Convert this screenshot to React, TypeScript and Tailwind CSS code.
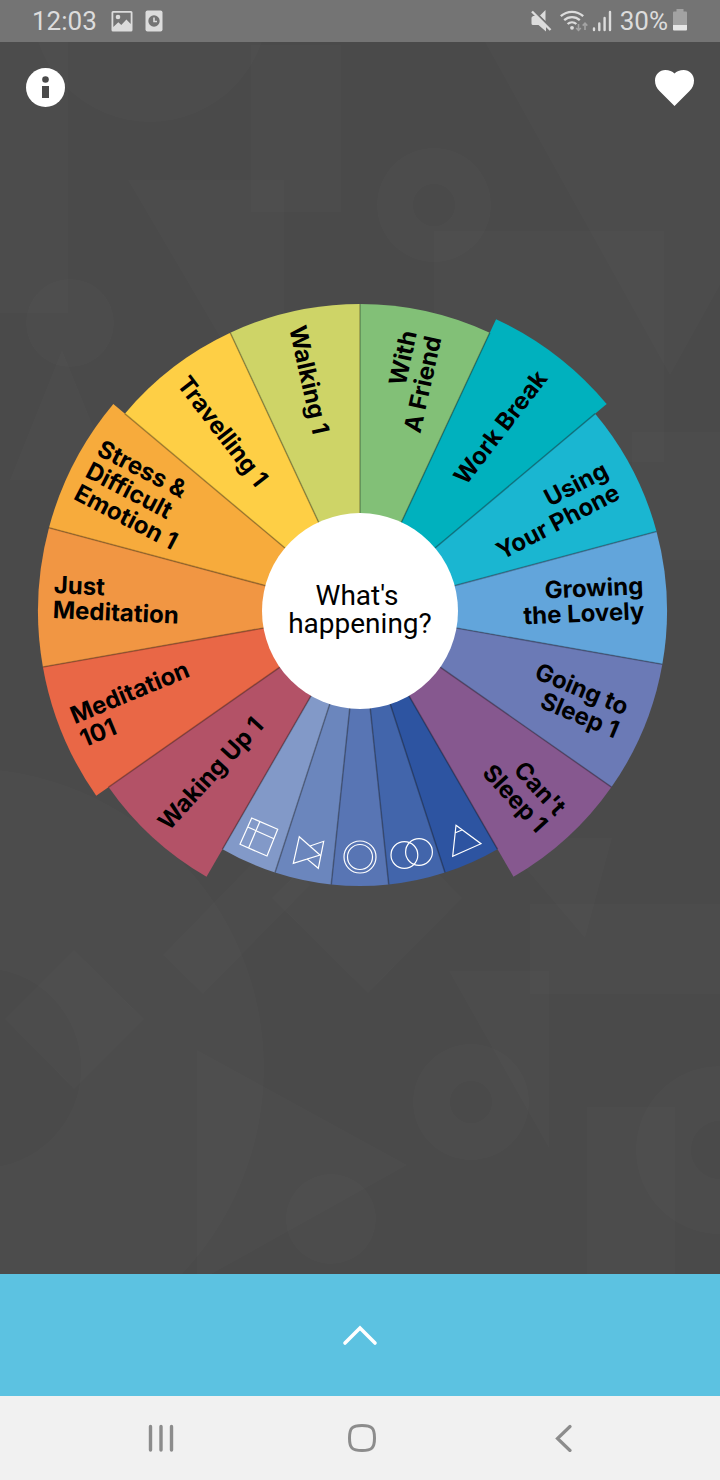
import React from "react";

type Slice = {
  lines: string[];
  from: number;
  to: number;
  radius: number;
  fill: string;
};

const CX = 360;
const CY = 611;
const HUB = 98;

const slices: Slice[] = [
  { lines: ["With", "A Friend"], from: 0, to: 25, radius: 307, fill: "#82c077" },
  { lines: ["Work Break"], from: 25, to: 50, radius: 322, fill: "#00b1be" },
  { lines: ["Using", "Your Phone"], from: 50, to: 75, radius: 307, fill: "#1ab6d1" },
  { lines: ["Growing", "the Lovely"], from: 75, to: 100, radius: 307, fill: "#62a5db" },
  { lines: ["Going to", "Sleep 1"], from: 100, to: 125, radius: 307, fill: "#6b7ab6" },
  { lines: ["Can't", "Sleep 1"], from: 125, to: 150, radius: 307, fill: "#86588f" },
  { lines: [], from: 150, to: 162, radius: 275, fill: "#2d54a1" },
  { lines: [], from: 162, to: 174, radius: 275, fill: "#4265ab" },
  { lines: [], from: 174, to: 186, radius: 275, fill: "#5875b4" },
  { lines: [], from: 186, to: 198, radius: 275, fill: "#6b86bd" },
  { lines: [], from: 198, to: 210, radius: 275, fill: "#8299c8" },
  { lines: ["Waking Up 1"], from: 210, to: 235, radius: 307, fill: "#b35267" },
  { lines: ["Meditation", "101"], from: 235, to: 260, radius: 322, fill: "#e96746" },
  { lines: ["Just", "Meditation"], from: 260, to: 285, radius: 322, fill: "#f19643" },
  { lines: ["Stress &", "Difficult", "Emotion 1"], from: 285, to: 310, radius: 322, fill: "#f7ab3c" },
  { lines: ["Travelling 1"], from: 310, to: 335, radius: 307, fill: "#fecf45" },
  { lines: ["Walking 1"], from: 335, to: 360, radius: 307, fill: "#ced467" },
];

const shapeNames = ["Triangle", "Two circles", "Rings", "Bow", "Window"];

function point(angle: number, radius: number) {
  const a = (angle * Math.PI) / 180;
  return { x: CX + radius * Math.sin(a), y: CY - radius * Math.cos(a) };
}

function wedge({ from, to, radius }: Slice) {
  const a = point(from, radius);
  const b = point(to, radius);
  return `M${CX} ${CY}L${a.x} ${a.y}A${radius} ${radius} 0 0 1 ${b.x} ${b.y}Z`;
}

function SliceLabel({ slice }: { slice: Slice }) {
  const mid = (slice.from + slice.to) / 2;
  const right = mid < 180;
  const rotation = right ? mid - 90 : mid - 270;
  const x = right ? slice.radius - 23 : 15 - slice.radius;
  const first = 8 - ((slice.lines.length - 1) * 25) / 2;
  return (
    <text
      transform={`translate(${CX} ${CY}) rotate(${rotation})`}
      textAnchor={right ? "end" : "start"}
      className="fill-black font-['Inter',sans-serif] text-[24px] font-bold"
    >
      {slice.lines.map((line, i) => (
        <tspan key={line} x={x} y={first + i * 25}>
          {line}
        </tspan>
      ))}
    </text>
  );
}

function Wheel() {
  return (
    <svg viewBox="0 281 720 660" className="block w-full max-w-[720px]" aria-label="Meditation wheel">
      {slices.map((slice, i) => (
        <a key={slice.from} href={`#slice-${i + 1}`} aria-label={slice.lines.join(" ") || shapeNames[i - 6]}>
          <path d={wedge(slice)} fill={slice.fill} />
          {slice.lines.length > 0 && <SliceLabel slice={slice} />}
        </a>
      ))}
      <g stroke="#000" strokeOpacity="0.28" strokeWidth="1.6">
        {slices.map((slice, i) => {
          const before = slices[(i + slices.length - 1) % slices.length];
          const end = point(slice.from, Math.min(slice.radius, before.radius));
          return <line key={slice.from} x1={CX} y1={CY} x2={end.x} y2={end.y} />;
        })}
      </g>
      <g fill="none" stroke="#fff" strokeWidth="1.2">
        <path d="M251.7 818 277.7 829.3 267 856 240 844.3ZM248.3 827.3 274 838.7M260 821.3 248.7 847.7" />
        <path d="M299.3 836.7 320 855 293.3 863.3ZM310 846 323.7 841.3 318.3 868.3 306.7 858.6" />
        <circle cx="360" cy="857" r="16" />
        <circle cx="360" cy="857" r="12.5" />
        <circle cx="404.4" cy="855" r="13.4" />
        <circle cx="419" cy="852" r="13.4" />
        <path d="M456 825.3 481 843.7 452.7 856.3ZM455.4 832.7 461.9 830" />
      </g>
      <circle cx={CX} cy={CY} r={HUB} fill="#fff" />
      <text textAnchor="middle" className="fill-black font-['Roboto',sans-serif] text-[28px]">
        <tspan x="357" y="605">What's</tspan>
        <tspan x="360" y="633">happening?</tspan>
      </text>
    </svg>
  );
}

function Backdrop() {
  return (
    <svg
      viewBox="0 42 720 1232"
      preserveAspectRatio="xMidYMid slice"
      className="absolute inset-0 h-full w-full"
      aria-hidden="true"
    >
      <g fill="#fff" fillOpacity="0.014" fillRule="evenodd">
        <path d="M0 42H68V313H0Z" />
        <circle cx="150" cy="4" r="118" />
        <path d="M251 45H341V212H251Z" />
        <path d="M128 180H284V446Z" />
        <path d="M377 205a57 57 0 1 0 114 0a57 57 0 1 0-114 0M413 205a21 21 0 1 1 42 0a21 21 0 1 1-42 0" />
        <path d="M434 231H664V462H434Z" />
        <path d="M485 42 670 375 720 285V42Z" />
        <circle cx="70" cy="323" r="44" />
        <path d="M62 350 115 480H10Z" />
        <path d="M632 432H720V560H632Z" />
        <path d="M74 950 144 1019 74 1089 5 1019Z" />
        <path d="M-336 1068a300 300 0 1 0 600 0a300 300 0 1 0-600 0M-119 1068a100 100 0 1 1 200 0a100 100 0 1 1-200 0" />
        <path d="M163 955 203 994 310 885 270 845Z" />
        <path d="M272 898 368 993 462 898 368 803Z" />
        <path d="M197 1050 407 1165 197 1282Z" />
        <circle cx="331" cy="1219" r="45" />
        <path d="M413 1102a58 58 0 1 0 116 0a58 58 0 1 0-116 0M450 1102a21 21 0 1 1 42 0a21 21 0 1 1-42 0" />
        <path d="M449 971H549V1148Z" />
        <path d="M530 904H720V994H530Z" />
        <path d="M585 938 500 838 612 838Z" />
        <path d="M587 1107H675V1275H587Z" />
        <path d="M636 1150a84 84 0 1 0 168 0a84 84 0 1 0-168 0M691 1150a29 29 0 1 1 58 0a29 29 0 1 1-58 0" />
      </g>
    </svg>
  );
}

function StatusBar() {
  return (
    <div className="flex h-[42px] shrink-0 items-center justify-between bg-[#747474] pr-8 pl-8 font-['Roboto',sans-serif] text-[26px] leading-none text-[#dcdcdc]">
      <div className="flex items-center gap-3">
        <span className="pr-0.5">12:03</span>
        <svg width="22" height="22" viewBox="0 0 22 22" fill="currentColor" aria-hidden="true">
          <path
            fillRule="evenodd"
            d="M2 1H20a1.5 1.5 0 0 1 1.5 1.5V20a1.5 1.5 0 0 1-1.5 1.5H2A1.5 1.5 0 0 1 .5 20V2.5A1.5 1.5 0 0 1 2 1ZM2.3 2.8V17L7.3 12.2 10.3 15 15.4 9.6 19.7 14V2.8Z"
          />
          <circle cx="7" cy="7" r="2.3" />
        </svg>
        <svg width="18" height="22" viewBox="0 0 18 22" aria-hidden="true">
          <rect x="0.5" y="0.5" width="17" height="21" rx="2" fill="currentColor" />
          <circle cx="9" cy="11" r="5.7" fill="#747474" />
          <path d="M9 7.5V11.5H12" fill="none" stroke="currentColor" strokeWidth="1.6" />
        </svg>
      </div>
      <div className="flex items-center gap-1">
        <div className="flex items-center gap-2">
          <svg width="22" height="22" viewBox="0 0 22 22" fill="currentColor" aria-hidden="true">
            <path d="M1.500 7.500 3 6H7L16 15V21.500L8.500 15H3A1.500 1.500 0 0 1 1.500 13.500Z" />
            <path d="M10 5.500 15.500 0V11Z" />
            <path d="M2 0 21.500 19.500" stroke="#747474" strokeWidth="3" />
            <path d="M2 1.500 20.500 20" stroke="currentColor" strokeWidth="2.4" />
          </svg>
          <svg width="28" height="22" viewBox="0 0 28 22" fill="none" stroke="currentColor" aria-hidden="true">
            <path d="M.8 6.2a16.5 16.5 0 0 1 22.4 0M4.2 10.2a11.5 11.5 0 0 1 15.6 0M7.6 14a6.6 6.6 0 0 1 8.8 0" strokeWidth="2.3" />
            <circle cx="12" cy="17.8" r="1.9" fill="currentColor" stroke="none" />
            <path d="M18.5 14V20M16.2 18 18.5 20.4 20.8 18M25 20V14M22.7 15.6 25 13.2 27.3 15.6" stroke="#a3a3a3" strokeWidth="1.6" />
          </svg>
        </div>
        <div className="flex items-center gap-2">
          <svg width="20" height="22" viewBox="0 0 20 22" stroke="currentColor" strokeWidth="2.4" strokeLinecap="round" aria-hidden="true">
            <path d="M2 18.500V20M7.300 13.500V20M12.600 8V20M18 2V20" />
          </svg>
          <div className="flex items-center gap-1">
            <span>30%</span>
            <svg width="16" height="24" viewBox="0 0 16 24" aria-hidden="true">
              <path d="M4.500 0H11.500V2.500H14a1 1 0 0 1 1 1V16H1V3.500a1 1 0 0 1 1-1H4.500Z" fill="#a2a2a2" />
              <path d="M1 16H15V20.500a1 1 0 0 1-1 1H2a1 1 0 0 1-1-1Z" fill="#e6e6e6" />
            </svg>
          </div>
        </div>
      </div>
    </div>
  );
}

export default function App() {
  return (
    <div className="flex min-h-screen flex-col bg-[#4a4a4a]">
      <StatusBar />
      <main className="relative flex-1">
        <Backdrop />
        <div className="relative flex flex-col items-center gap-[174px]">
          <header className="flex w-full items-center justify-between px-[26px] pt-[26px]">
            <button type="button" aria-label="Information">
              <svg className="block" width="39" height="39" viewBox="0 0 39 39" aria-hidden="true">
                <circle cx="19.5" cy="19.5" r="19.5" fill="#fff" />
                <circle cx="19.5" cy="11.5" r="3.3" fill="#4a4a4a" />
                <path d="M16 18H23V30H16Z" fill="#4a4a4a" />
              </svg>
            </button>
            <button type="button" aria-label="Favourites">
              <svg className="block" width="39" height="39" viewBox="0 0 39 39" aria-hidden="true">
                <path
                  d="M19.500 38L4.500 23C1.500 20 0 17 0 12.500C0 6.500 4.800 2 10.300 2C14 2 17.500 3.400 19.500 5.500C21.500 3.400 25 2 28.700 2C34.200 2 39 6.500 39 12.500C39 17 37.500 20 34.500 23Z"
                  fill="#fff"
                />
              </svg>
            </button>
          </header>
          <Wheel />
        </div>
      </main>
      <button type="button" aria-label="Show more" className="flex h-[122px] w-full shrink-0 items-center justify-center bg-[#5cc2e1]">
        <svg width="36" height="24" viewBox="0 0 36 24" fill="none" stroke="#fff" strokeWidth="3.6" strokeLinecap="round" aria-hidden="true">
          <path d="M3 20 18 5 33 20" />
        </svg>
      </button>
      <nav className="grid h-[84px] shrink-0 grid-cols-3 bg-[#f1f1f1] pr-14 pl-[60px] text-[#8c8c8c]">
        <button type="button" aria-label="Recent apps" className="flex items-center justify-center">
          <svg width="28" height="28" viewBox="0 0 28 28" stroke="currentColor" strokeWidth="3.4" strokeLinecap="round" aria-hidden="true">
            <path d="M3.500 2.500V26M14 2.500V26M24.500 2.500V26" />
          </svg>
        </button>
        <button type="button" aria-label="Home" className="flex items-center justify-center">
          <svg width="30" height="30" viewBox="0 0 30 30" fill="none" stroke="currentColor" strokeWidth="3" aria-hidden="true">
            <path d="M15 2.500C25 2.500 27.500 5 27.500 15S25 27.500 15 27.500S2.500 25 2.500 15S5 2.500 15 2.500Z" />
          </svg>
        </button>
        <button type="button" aria-label="Back" className="flex items-center justify-center">
          <svg width="18" height="28" viewBox="0 0 18 28" fill="none" stroke="currentColor" strokeWidth="3.2" strokeLinecap="round" aria-hidden="true">
            <path d="M16 2.500 3.500 14.500 16 26.500" />
          </svg>
        </button>
      </nav>
    </div>
  );
}
